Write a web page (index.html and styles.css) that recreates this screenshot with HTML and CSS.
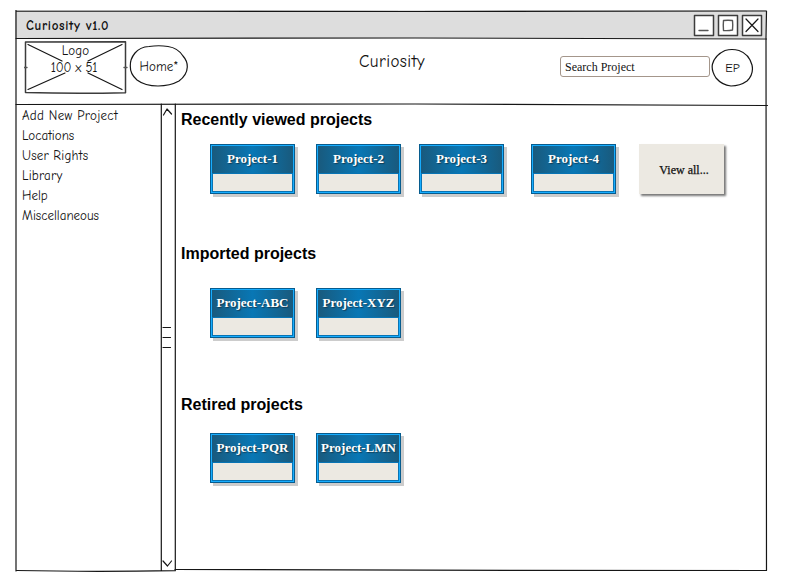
FILE: index.html
```html
<!DOCTYPE html>
<html lang="en">
<head>
<meta charset="utf-8">
<title>Curiosity v1.0</title>
<link rel="stylesheet" href="styles.css">
</head>
<body>
<div class="window">
  <div class="titlebar">
    <span class="window-title">Curiosity v1.0</span>
    <div class="controls">
      <svg class="control" viewBox="0 0 22 23"><path class="box" d="M1.500 1.500L20.500 1.500V21.500H1.500Z"/><path class="faint" d="M6 16.500H15"/></svg>
      <svg class="control" viewBox="0 0 22 23"><path class="box" d="M1.500 1.500L20.500 1.500V21.500H1.500Z"/><path class="faint" d="M6.500 6.500Q11 6 15.500 6.500Q16 11 15.500 16Q11 17 6.500 16.500Q6 11 6.500 6.500Z"/></svg>
      <svg class="control" viewBox="0 0 22 23"><path class="box" d="M1.500 1.500L20.500 1.500V21.500H1.500Z"/><path d="M5 5L17 17.500M17 5L5 17.500"/></svg>
    </div>
  </div>
  <header class="header">
    <div class="logo">
      <svg class="backdrop" viewBox="0 0 104 54"><path class="box" d="M1.500 1L101.500 .800V51.700Q52 53 1.500 51.500Z"/><path d="M4 3.500L38 20M98 3.500L64 20M4 48.500L41 32M98 48.500L64 32"/><path class="faint" d="M0 26.500H3M100 26.500H103"/></svg>
      <span class="logo-name">Logo</span><span class="logo-size">100 x 51</span>
    </div>
    <a class="oval home"><svg class="backdrop" viewBox="0 0 60 44"><path d="M20 2.500Q30 1 39 2.500Q49 4 54 12Q58.500 17 58.300 23Q58 31 50 37Q41 42 29 42Q16 42 8 36Q1 30 1.300 22Q1 15 6 9Q11 3 20 2.500Z"/></svg><span class="home-label">Home*</span></a>
    <h1 class="app-name"><span class="app-label">Curiosity</span></h1>
    <div class="search">Search Project</div>
    <div class="oval user"><svg class="backdrop" viewBox="0 0 43 40"><path d="M14 2.500Q21 .500 28 2.500Q38 6 41 17Q43 26 36 33Q29 38 20 38Q11 37 5 30Q0 22 1.500 16Q4 7 14 2.500Z"/></svg><span class="user-label">EP</span></div>
  </header>
  <div class="body">
    <nav class="sidebar">
      <a class="add">Add New Project</a>
      <a class="locations">Locations</a>
      <a class="rights">User Rights</a>
      <a class="library">Library</a>
      <a class="help">Help</a>
      <a class="misc">Miscellaneous</a>
    </nav>
    <div class="scrollbar">
      <svg viewBox="0 0 16 14"><path d="M2.500 11L6 5L10.500 10"/></svg>
      <svg class="grip" viewBox="0 0 16 24"><path d="M2 2.500H9.500M2 12.500H9.500M2 22.500H9.500"/></svg>
      <svg viewBox="0 0 16 14"><path d="M2 5L6.500 10L10.500 5"/></svg>
    </div>
    <main class="content">
      <section class="recent">
        <h2>Recently viewed projects</h2>
        <div class="cards">
          <div class="card"><div class="card-title">Project-1</div></div>
          <div class="card"><div class="card-title">Project-2</div></div>
          <div class="card third"><div class="card-title">Project-3</div></div>
          <div class="card fourth"><div class="card-title">Project-4</div></div>
          <div class="view-all">View all...</div>
        </div>
      </section>
      <section class="imported">
        <h2>Imported projects</h2>
        <div class="cards">
          <div class="card"><div class="card-title">Project-ABC</div></div>
          <div class="card"><div class="card-title">Project-XYZ</div></div>
        </div>
      </section>
      <section class="retired">
        <h2>Retired projects</h2>
        <div class="cards">
          <div class="card"><div class="card-title">Project-PQR</div></div>
          <div class="card"><div class="card-title">Project-LMN</div></div>
        </div>
      </section>
    </main>
  </div>
  <svg class="frame" viewBox="0 0 755 564">
    <path d="M1 1L400 1.500L751.500 1L751 28L751.500 560.500L500 560.300L160 559.500M1 .500V561"/>
    <path d="M1 28.500L400 28L751.500 29M1 94.500L400 94L752.500 95.500"/>
    <path d="M146.300 94V560.500M160.300 94V560.500M1.500 560.500Q75 562 160.300 560.700"/>
  </svg>
</div>
</body>
</html>
```

FILE: styles.css
```css
*, *::after { box-sizing: border-box; }
body {
  margin: 0;
  width: 785px;
  height: 585px;
  padding: 10px 0 0 15px;
  overflow: hidden;
  background: #fff;
  color: #111;
  font-family: "Comic Sans MS", "Comic Neue", "Open Sans", sans-serif;
  font-size: 13px;
}
svg {
  display: block;
  fill: none;
  stroke: #161616;
  stroke-width: 1.2;
  stroke-linecap: round;
  stroke-linejoin: round;
}
.window { position: relative; width: 755px; height: 564px; }
.frame { position: absolute; left: 0; top: 0; width: 755px; height: 564px; pointer-events: none; }
.titlebar {
  display: flex;
  align-items: center;
  justify-content: space-between;
  width: 751px;
  height: 28px;
  padding: 1px 4px 0 11px;
  background: #ddd;
}
.window-title { font-weight: 700; line-height: 20px; padding-top: 3px; letter-spacing: .68px; }
.controls { display: flex; gap: 2px; padding-top: 1px; margin-right: -1px; }
.control { width: 22px; height: 23px; }
.box { fill: #fff; stroke: #3c3c3c; stroke-width: 1.5; }
.faint { stroke: #555; stroke-width: 1.4; }
.header { display: flex; height: 66px; padding-left: 9px; }
.backdrop { position: absolute; inset: 0; width: 100%; height: 100%; z-index: -1; }
.logo {
  position: relative;
  z-index: 0;
  display: flex;
  flex-direction: column;
  align-items: center;
  width: 104px;
  height: 54px;
  margin-top: 3px;
  padding: 1px 1px 0 0;
  line-height: 17px;
}
.logo-name { letter-spacing: .1px; }
.logo-size { letter-spacing: -.2px; margin-right: 3px; }
.oval { position: relative; z-index: 0; display: flex; align-items: center; justify-content: center; }
.home { width: 60px; height: 44px; margin: 6px 0 0 1px; }
.home-label { letter-spacing: .1px; }
.app-name { width: 371px; margin: 12px 0 0; padding-left: 35px; text-align: center; font-size: 17px; line-height: 24px; font-weight: 400; letter-spacing: .46px; }
.search {
  width: 150px;
  height: 21px;
  margin-top: 18px;
  padding-left: 4px;
  border: 1px solid #a4968b;
  border-radius: 3px;
  font: 12px/20px "Liberation Serif", serif;
}
.user { width: 43px; height: 40px; margin: 10px 0 0 1px; }
.user-label { font-size: 12.5px; }
.body { display: flex; height: 466px; }
.sidebar { display: flex; flex-direction: column; align-items: flex-start; width: 146px; padding: 2px 0 0 7px; line-height: 20px; }
.add { letter-spacing: .3px; }
.library, .rights { letter-spacing: .2px; }
.scrollbar { display: flex; flex-direction: column; justify-content: space-between; width: 16px; }
.scrollbar svg { width: 16px; height: 14px; }
.scrollbar .grip { height: 24px; }
.content { flex: 1; padding: 7px 0 0 4px; font-family: "Liberation Sans", Arial, sans-serif; }
.recent { height: 134px; }
.imported { height: 151px; }
h2 { margin: 0; font-size: 16px; line-height: 18px; color: #000; }
.cards { display: flex; margin: 15px 0 0 29px; font-family: "Liberation Serif", serif; }
.imported .cards { margin-top: 25px; }
.retired .cards { margin-top: 19px; }
.card {
  width: 85px;
  height: 50px;
  margin-right: 21px;
  border: 1px solid #075c8e;
  background: #17adff;
  padding: 1px;
  box-shadow: 3px 3px 0 #ccc;
}
.card::after { content: ""; display: block; height: 19px; border: 1px solid #0874b4; background: #ece9e2; }
.card-title {
  height: 27px;
  background: linear-gradient(90deg, #195a7d, #0877b5 50%, #195a7d);
  color: #fff;
  font-size: 13px;
  font-weight: 700;
  line-height: 25px;
  text-align: center;
  text-shadow: 1px 1px 1px #123d55;
  white-space: nowrap;
}
.third { margin-left: -3px; }
.fourth { margin-left: 6px; }
.view-all {
  width: 85px;
  height: 50px;
  margin-left: 2px;
  padding-left: 5px;
  background: #ece9e2;
  box-shadow: 2px 2px 2px #777;
  font-size: 12px;
  line-height: 52px;
  text-align: center;
  -webkit-text-stroke: .25px #111;
}
```
